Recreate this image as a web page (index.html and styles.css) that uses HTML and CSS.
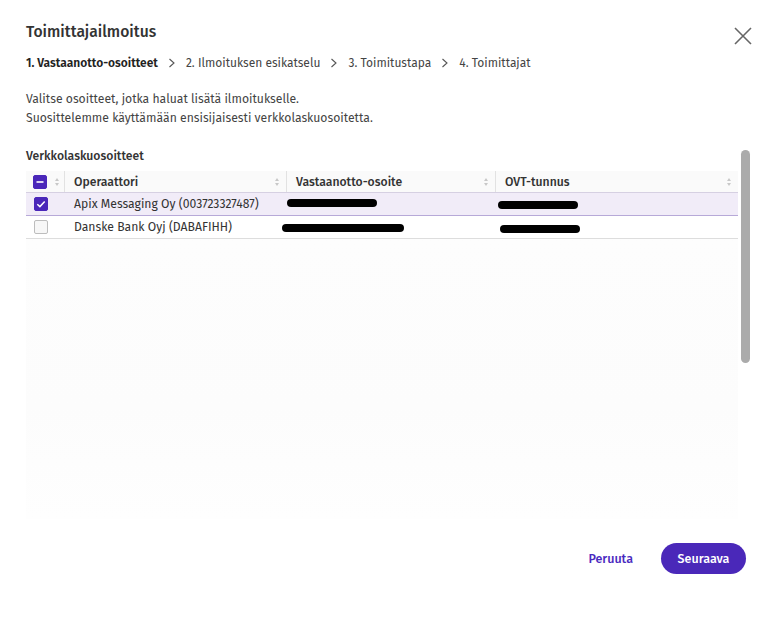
FILE: index.html
```html
<!DOCTYPE html>
<html lang="fi">
<head>
<meta charset="utf-8">
<title>Toimittajailmoitus</title>
<link rel="stylesheet" href="styles.css">
</head>
<body>
<div class="dialog">
  <header class="head">
    <h1 class="title">Toimittajailmoitus</h1>
    <button class="close" aria-label="Sulje">
      <svg width="18" height="18" viewBox="0 0 18 18"><path d="M1 1L17 17M17 1L1 17" stroke="#666" stroke-width="1.6" fill="none"/></svg>
    </button>
  </header>
  <nav class="steps">
    <span class="step active">1. Vastaanotto-osoitteet</span>
    <svg class="chev" width="8" height="10" viewBox="0 0 8 10"><path d="M1.5 1L6 5L1.5 9" stroke="#555" stroke-width="1.1" fill="none"/></svg>
    <span class="step">2. Ilmoituksen esikatselu</span>
    <svg class="chev" width="8" height="10" viewBox="0 0 8 10"><path d="M1.5 1L6 5L1.5 9" stroke="#555" stroke-width="1.1" fill="none"/></svg>
    <span class="step">3. Toimitustapa</span>
    <svg class="chev" width="8" height="10" viewBox="0 0 8 10"><path d="M1.5 1L6 5L1.5 9" stroke="#555" stroke-width="1.1" fill="none"/></svg>
    <span class="step">4. Toimittajat</span>
  </nav>
  <div class="body">
    <div class="content">
      <p class="intro">Valitse osoitteet, jotka haluat lisätä ilmoitukselle.<br>Suosittelemme käyttämään ensisijaisesti verkkolaskuosoitetta.</p>
      <h2 class="section">Verkkolaskuosoitteet</h2>
      <div class="table">
        <div class="row header">
          <div class="cell c-check"><span class="cb cb-on"><svg width="14" height="14" viewBox="0 0 14 14"><path d="M3.5 7H10.5" stroke="#fff" stroke-width="1.6"/></svg></span><span class="sort"></span></div>
          <div class="cell c-op">Operaattori<span class="sort"></span></div>
          <div class="cell c-addr">Vastaanotto-osoite<span class="sort"></span></div>
          <div class="cell c-ovt">OVT-tunnus<span class="sort"></span></div>
        </div>
        <div class="row selected">
          <div class="cell c-check"><span class="cb cb-on"><svg width="14" height="14" viewBox="0 0 14 14"><path d="M3.3 7.2L5.9 9.6L10.7 4.6" stroke="#fff" stroke-width="1.5" fill="none"/></svg></span></div>
          <div class="cell c-op">Apix Messaging Oy (003723327487)</div>
          <div class="cell c-addr"><span class="redact r1"></span></div>
          <div class="cell c-ovt"><span class="redact r3"></span></div>
        </div>
        <div class="row last">
          <div class="cell c-check"><span class="cb"></span></div>
          <div class="cell c-op">Danske Bank Oyj (DABAFIHH)</div>
          <div class="cell c-addr"><span class="redact r2"></span></div>
          <div class="cell c-ovt"><span class="redact r4"></span></div>
        </div>
        <div class="erased"></div>
      </div>
    </div>
    <div class="scrollbar"><div class="thumb"></div></div>
  </div>
  <footer class="foot">
    <button class="btn-text">Peruuta</button>
    <button class="btn-primary">Seuraava</button>
  </footer>
</div>
</body>
</html>
```
FILE: styles.css
```css
* { box-sizing: border-box; }
html, body { margin: 0; padding: 0; background: #fff; }
body {
  font-family: "Fira Sans", "Noto Sans", Roboto, sans-serif;
  color: #333;
  font-size: 12.2px;
}
.dialog {
  width: 784px;
  height: 620px;
  padding: 22px 26px 0 26px;
  display: flex;
  flex-direction: column;
}
.head {
  display: flex;
  justify-content: space-between;
  align-items: flex-start;
}
.title {
  margin: 0;
  font-size: 15.7px;
  font-weight: 500;
  line-height: 20px;
  color: #333;
}
.close {
  border: 0;
  background: none;
  padding: 0;
  margin: 5px 6px 0 0;
  width: 18px;
  height: 18px;
  cursor: pointer;
}
.steps {
  display: flex;
  align-items: center;
  gap: 10px;
  margin-top: 10px;
  font-size: 12px;
  line-height: 16px;
  color: #444;
}
.step.active { font-weight: 600; color: #222; }
.chev { display: block; }
.body {
  display: flex;
  gap: 3px;
  margin-top: 19px;
  margin-right: 8px;
  height: 450px;
}
.content { flex: 1; }
.intro {
  margin: 0;
  font-size: 12.2px;
  line-height: 19px;
  color: #444;
}
.section {
  margin: 19px 0 6px;
  font-size: 12.2px;
  line-height: 18px;
  font-weight: 500;
  color: #333;
}
.table { font-size: 12.2px; color: #333; }
.row {
  display: flex;
  height: 23px;
  align-items: stretch;
  border-bottom: 1px solid #ddd;
}
.row.header {
  height: 22px;
  background: #fafafa;
  border-bottom: 1px solid #d6d0e2;
  font-weight: 500;
  color: #333;
}
.row.selected {
  background: #f1ecf8;
  border-bottom: 1px solid #b7a9d8;
}
.cell {
  display: flex;
  align-items: center;
  position: relative;
  padding-left: 9px;
}
.c-check { width: 38px; padding-left: 7px; }
.c-op { width: 222px; }
.c-addr { width: 209px; }
.c-ovt { flex: 1; }
.header .c-op, .header .c-addr, .header .c-ovt { border-left: 1px solid #e2e2e2; }
.row:not(.header) .cell { border-left: 1px solid transparent; }
.sort {
  position: absolute;
  right: 6px;
  top: 7px;
  width: 5px;
  height: 8px;
}
.sort::before, .sort::after {
  content: "";
  position: absolute;
  left: 0;
  border-left: 2.5px solid transparent;
  border-right: 2.5px solid transparent;
}
.sort::before { top: 0; border-bottom: 3px solid #c8c8c8; }
.sort::after { bottom: 0; border-top: 3px solid #c8c8c8; }
.c-check .sort { right: 4px; }
.cb {
  width: 14px;
  height: 14px;
  border: 1px solid #bdbdbd;
  border-radius: 2px;
  background: #f7f7f7;
  display: block;
}
.cb svg { display: block; margin: -1px; }
.cb-on { background: #4a27b9; border-color: #4a27b9; }
.redact {
  display: block;
  height: 8px;
  border-radius: 4px;
  background: #000;
}
.r1 { width: 90px; margin-left: -9px; margin-top: -2px; }
.r2 { width: 122px; margin-left: -14px; margin-top: 2px; }
.r3 { width: 80px; margin-left: -7px; margin-top: 2px; }
.r4 { width: 80px; margin-left: -5px; margin-top: 3px; }
.erased {
  height: 280px;
  background: linear-gradient(180deg, #fdfdfd, #fcfcfc 60%, #fefefe);
}
.scrollbar { width: 9px; padding-top: 60px; }
.thumb {
  width: 9px;
  height: 213px;
  background: #ababab;
  border-radius: 5px;
}
.foot {
  display: flex;
  justify-content: flex-end;
  align-items: center;
  gap: 28px;
  padding-right: 12px;
  margin-top: 3px;
}
.btn-text {
  border: 0;
  background: none;
  font-family: inherit;
  font-size: 12.5px;
  font-weight: 500;
  color: #4a2bbf;
  padding: 0;
  cursor: pointer;
}
.btn-primary {
  border: 0;
  background: #4a28b9;
  color: #fff;
  font-family: inherit;
  font-size: 12.5px;
  font-weight: 500;
  height: 31px;
  width: 85px;
  border-radius: 16px;
  cursor: pointer;
}
```
